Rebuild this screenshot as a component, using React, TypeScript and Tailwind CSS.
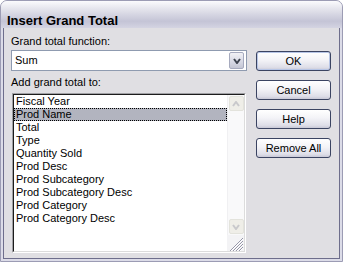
const items = [
  'Fiscal Year',
  'Prod Name',
  'Total',
  'Type',
  'Quantity Sold',
  'Prod Desc',
  'Prod Subcategory',
  'Prod Subcategory Desc',
  'Prod Category',
  'Prod Category Desc',
];

const selectedIndex = 1;

function Chevron({ up = false, color, width = 7, stroke = 2 }: { up?: boolean; color: string; width?: number; stroke?: number }) {
  return (
    <svg width={width + 2} height={6} viewBox={`0 0 ${width + 2} 6`}>
      <path
        d={up ? `M1 5 L${(width + 2) / 2} 1 L${width + 1} 5` : `M1 1 L${(width + 2) / 2} 5 L${width + 1} 1`}
        fill="none"
        stroke={color}
        strokeWidth={stroke}
      />
    </svg>
  );
}

function DialogButton({ label, isDefault = false }: { label: string; isDefault?: boolean }) {
  return (
    <button
      className={`flex h-[20px] w-[75px] items-center justify-center rounded-[3px] border border-[#3b4462] bg-[linear-gradient(to_bottom,#ffffff_0%,#f3f3f7_45%,#dedee8_85%,#c8c8d6_100%)] text-[11px] leading-none text-black ${
        isDefault ? 'shadow-[inset_0_0_0_1px_#b7c5e6]' : ''
      }`}
    >
      {label}
    </button>
  );
}

function ScrollButton({ up = false }: { up?: boolean }) {
  return (
    <div className="mx-auto flex h-[15px] w-[15px] items-center justify-center rounded-[2px] border border-[#e3e3dc] bg-[#efeee8]">
      <Chevron up={up} color="#c9c9cc" width={6} />
    </div>
  );
}

function SizeGrip() {
  return (
    <svg width={16} height={16} viewBox="0 0 16 16">
      {[3, 6, 9, 12].map((k) => (
        <g key={k}>
          <line x1={k} y1={16} x2={16} y2={k} stroke="#9696a8" strokeWidth={1} />
          <line x1={k + 1} y1={16} x2={16} y2={k + 1} stroke="#ffffff" strokeWidth={1} />
        </g>
      ))}
    </svg>
  );
}

export default function App() {
  return (
    <div
      className="flex h-[262px] w-[343px] flex-col overflow-hidden rounded-t-[7px] border border-[#9c9cb4] bg-[#dcdce8] text-black"
      style={{ fontFamily: '"Liberation Sans", Arial, sans-serif' }}
    >
      {/* Title bar */}
      <div className="h-[27px] shrink-0 bg-[linear-gradient(to_bottom,#fbfbfd_0%,#e4e4ec_30%,#c4c4d6_75%,#d4d4e2_100%)] pl-[6px] pt-[7px]">
        <span className="text-[13px] font-bold leading-[16px]">Insert Grand Total</span>
      </div>

      {/* Client area */}
      <div className="mx-[2px] mb-[2px] flex flex-1 gap-[9px] border border-t-0 border-[#6e6e8c] bg-[#e0dfe3] pl-[7px] pt-[7px]">
        {/* Left column */}
        <div className="flex w-[236px] flex-col">
          <div className="text-[11px] leading-[13px]">Grand total function:</div>
          <div className="mt-[2px] flex h-[21px] items-center justify-between border border-[#8f9bb0] bg-white pr-[2px]">
            <span className="pl-[3px] text-[11px] leading-[13px]">Sum</span>
            <div className="flex h-[17px] w-[15px] items-center justify-center rounded-[2px] border border-[#a6aabe] bg-[linear-gradient(to_bottom,#f2f2f6_0%,#d6d8e4_60%,#c4c6d4_100%)]">
              <Chevron color="#3e4450" width={6} />
            </div>
          </div>

          <div className="mt-[5px] text-[11px] leading-[13px]">Add grand total to:</div>

          {/* Listbox */}
          <div className="ml-[1px] mt-[4px] h-[160px] w-[234px] border border-b-[#ffffff] border-l-[#a0a0a4] border-r-[#ffffff] border-t-[#a0a0a4]">
            <div className="flex h-full border border-b-[#dcdcdc] border-l-[#1c1c1c] border-r-[#dcdcdc] border-t-[#1c1c1c] bg-white">
              <div className="flex-1">
                {items.map((item, i) => (
                  <div
                    key={item}
                    className={`h-[13px] whitespace-nowrap pl-[2px] text-[11px] leading-[13px] ${
                      i === selectedIndex ? 'bg-[#b2b4bf] outline-1 -outline-offset-1 outline-dotted outline-black' : ''
                    }`}
                  >
                    {item}
                  </div>
                ))}
              </div>

              {/* Disabled scrollbar + size grip */}
              <div className="flex w-[17px] flex-col bg-[#f9f9fa]">
                <div className="flex flex-1 flex-col justify-between border-l border-[#f0f0f2] py-[1px]">
                  <ScrollButton up />
                  <ScrollButton />
                </div>
                <div className="h-[16px] bg-[#f3f3f5]">
                  <SizeGrip />
                </div>
              </div>
            </div>
          </div>
        </div>

        {/* Buttons */}
        <div className="mt-[16px] flex flex-col gap-[9px]">
          <DialogButton label="OK" isDefault />
          <DialogButton label="Cancel" />
          <DialogButton label="Help" />
          <DialogButton label="Remove All" />
        </div>
      </div>
    </div>
  );
}
